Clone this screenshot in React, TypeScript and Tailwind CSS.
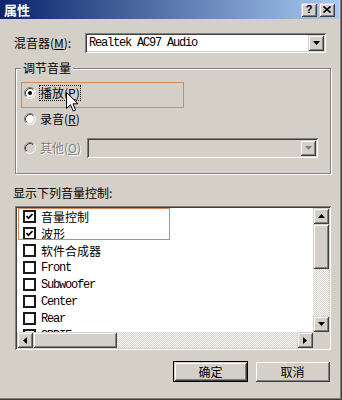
import React from "react";

const raised =
  "bg-[#d4d0c8] shadow-[inset_1px_1px_0_#d4d0c8,inset_-1px_-1px_0_#404040,inset_2px_2px_0_#fff,inset_-2px_-2px_0_#808080]";
const sunken =
  "shadow-[inset_1px_1px_0_#808080,inset_-1px_-1px_0_#fff,inset_2px_2px_0_#404040,inset_-2px_-2px_0_#d4d0c8]";
const dither =
  "bg-[image:repeating-conic-gradient(#ffffff_0_25%,#d4d0c8_0_50%)] bg-[length:2px_2px]";
const mono = "font-['Liberation_Mono','Noto_Sans_CJK_SC',monospace] tracking-[-1.2px]";

function Tri({ dir, color = "#000" }: { dir: "up" | "down" | "left" | "right"; color?: string }) {
  const pts =
    dir === "down"
      ? "0,0 7,0 3.5,4"
      : dir === "up"
      ? "0,4 7,4 3.5,0"
      : dir === "left"
      ? "4,0 4,7 0,3.5"
      : "0,0 0,7 4,3.5";
  const w = dir === "up" || dir === "down" ? 7 : 4;
  const h = dir === "up" || dir === "down" ? 4 : 7;
  return (
    <svg width={w} height={h} viewBox={`0 0 ${w} ${h}`}>
      <polygon points={pts} fill={color} />
    </svg>
  );
}

function Radio({ checked, disabled }: { checked?: boolean; disabled?: boolean }) {
  return (
    <svg width="12" height="12" viewBox="0 0 12 12" className="shrink-0">
      <circle cx="6" cy="6" r="5" fill={disabled ? "#d4d0c8" : "#fff"} />
      <path d="M2.11 9.89 A5.5 5.5 0 0 1 9.89 2.11" stroke="#808080" fill="none" />
      <path d="M9.89 2.11 A5.5 5.5 0 0 1 2.11 9.89" stroke="#fff" fill="none" />
      <path d="M2.82 9.18 A4.5 4.5 0 0 1 9.18 2.82" stroke="#404040" fill="none" />
      <path d="M9.18 2.82 A4.5 4.5 0 0 1 2.82 9.18" stroke="#d4d0c8" fill="none" />
      {checked && <circle cx="6" cy="6" r="2" fill="#000" />}
    </svg>
  );
}

function Check({ checked }: { checked?: boolean }) {
  return (
    <div className="w-[13px] h-[13px] border-2 border-[#1a1a1a] bg-white flex items-center justify-center shrink-0">
      {checked && (
        <svg width="7" height="7" viewBox="0 0 7 7">
          <polyline points="0.5,3 2.5,5.2 6.5,1" stroke="#000" strokeWidth="1.7" fill="none" />
        </svg>
      )}
    </div>
  );
}

const items: { label: string; checked?: boolean; en?: boolean }[] = [
  { label: "音量控制", checked: true },
  { label: "波形", checked: true },
  { label: "软件合成器" },
  { label: "Front", en: true },
  { label: "Subwoofer", en: true },
  { label: "Center", en: true },
  { label: "Rear", en: true },
  { label: "SPDIF", en: true },
];

export default function App() {
  return (
    <div className="relative w-[342px] h-[400px] bg-[#d4d0c8] pr-[3px] pb-[3px] shadow-[inset_-1px_-1px_0_#404040,inset_-2px_-2px_0_#808080] font-['Noto_Sans_CJK_SC',sans-serif] text-[12px] text-black overflow-hidden">
      {/* Title bar */}
      <div className="h-[19px] flex items-center justify-between bg-[linear-gradient(to_right,#0a246a,#a6caf0)] pl-[4px] pr-[4px]">
        <span className="text-white font-bold text-[13px] leading-[19px]">属性</span>
        <div className="flex gap-[2px]">
          <div className={`w-[16px] h-[14px] flex items-center justify-center ${raised}`}>
            <span className="font-['Liberation_Sans',sans-serif] font-bold text-[11px] leading-[11px] text-black">?</span>
          </div>
          <div className={`w-[16px] h-[14px] flex items-center justify-center ${raised}`}>
            <svg width="8" height="7" viewBox="0 0 8 7">
              <path d="M0.5 0.5 L7.5 6.5 M7.5 0.5 L0.5 6.5" stroke="#000" strokeWidth="1.6" />
            </svg>
          </div>
        </div>
      </div>

      <div className="pl-[15px]">
        {/* Mixer row */}
        <div className="mt-[14px] h-[20px] flex items-center">
          <span className="w-[71px] -ml-[1px] leading-[14px] whitespace-nowrap">
            混音器(<span className="underline">M</span>):
          </span>
          <div className={`w-[241px] h-[20px] bg-white p-[2px] flex items-center ${sunken}`}>
            <span className={`flex-1 pl-[2px] text-[12px] leading-[14px] ${mono}`}>Realtek AC97 Audio</span>
            <div className={`w-[16px] h-[16px] flex items-center justify-center ${raised}`}>
              <Tri dir="down" />
            </div>
          </div>
        </div>

        {/* Group box */}
        <div className="relative mt-[15px] w-[316px] h-[106px] border border-[#808080] shadow-[inset_1px_1px_0_#fff,1px_1px_0_#fff] pl-[8px] pt-[14px]">
          <span className="absolute -top-[8px] left-[5px] px-[2px] bg-[#d4d0c8] leading-[14px]">调节音量</span>

          <div className="h-[20px] flex items-center">
            <Radio checked />
            <span className="ml-[3px] border border-dotted border-black leading-[14px]">
              播放(<span className="underline">P</span>)
            </span>
          </div>
          <div className="mt-[6px] h-[20px] flex items-center">
            <Radio />
            <span className="ml-[4px] leading-[14px]">
              录音(<span className="underline">R</span>)
            </span>
          </div>
          <div className="mt-[9px] h-[20px] flex items-center">
            <Radio disabled />
            <span className="ml-[4px] w-[47px] leading-[14px] text-[#808080] [text-shadow:1px_1px_0_#fff]">
              其他(<span className="underline">O</span>)
            </span>
            <div className={`w-[231px] h-[20px] bg-[#d4d0c8] p-[2px] flex items-center justify-end ${sunken}`}>
              <div className={`w-[16px] h-[16px] flex items-center justify-center ${raised}`}>
                <Tri dir="down" color="#808080" />
              </div>
            </div>
          </div>

          {/* annotation box */}
          <div className="absolute left-[5px] top-[13px] w-[163px] h-[26px] border border-[#d4875a]" />
          {/* mouse cursor */}
          <svg className="absolute left-[50px] top-[23px]" width="13" height="21" viewBox="0 0 13 21">
            <path d="M0.5 0.5 L0.5 16.5 L4.5 12.7 L7.2 19 L9.6 18 L7 11.8 L12 11.8 Z" fill="#fff" stroke="#000" strokeWidth="1" />
          </svg>
        </div>

        <div className="mt-[12px] h-[14px] leading-[14px] -ml-[2px]">显示下列音量控制:</div>

        {/* List box */}
        <div className={`mt-[6px] w-[316px] h-[144px] p-[2px] bg-white ${sunken}`}>
          <div className="w-full h-full grid grid-cols-[1fr_16px] grid-rows-[1fr_16px]">
            <div className="relative overflow-hidden bg-white">
              {items.map((it) => (
                <div key={it.label} className="h-[17px] flex items-center pl-[6px]">
                  <Check checked={it.checked} />
                  <span
                    className={`ml-[5px] whitespace-nowrap leading-[14px] ${it.en ? mono : ""}`}
                  >
                    {it.label}
                  </span>
                </div>
              ))}
              <div className="absolute left-[1px] top-0 w-[152px] h-[32px] border border-[#d4875a]" />
            </div>
            <div className="flex flex-col">
              <div className={`h-[16px] flex items-center justify-center ${raised}`}>
                <Tri dir="up" />
              </div>
              <div className={`h-[45px] ${raised}`} />
              <div className={`flex-1 ${dither}`} />
              <div className={`h-[16px] flex items-center justify-center ${raised}`}>
                <Tri dir="down" />
              </div>
            </div>
            <div className="flex">
              <div className={`w-[16px] flex items-center justify-center ${raised}`}>
                <Tri dir="left" />
              </div>
              <div className={`w-[84px] ${raised}`} />
              <div className={`flex-1 ${dither}`} />
              <div className={`w-[16px] flex items-center justify-center ${raised}`}>
                <Tri dir="right" />
              </div>
            </div>
            <div className="bg-[#d4d0c8]" />
          </div>
        </div>

        {/* Buttons */}
        <div className="mt-[11px] w-[315px] flex justify-end gap-[7px]">
          <div className={`w-[75px] h-[21px] border border-black flex items-center justify-center ${raised}`}>
            <span className="leading-[14px]">确定</span>
          </div>
          <div className={`w-[75px] h-[21px] flex items-center justify-center ${raised}`}>
            <span className="leading-[14px]">取消</span>
          </div>
        </div>
      </div>
    </div>
  );
}
